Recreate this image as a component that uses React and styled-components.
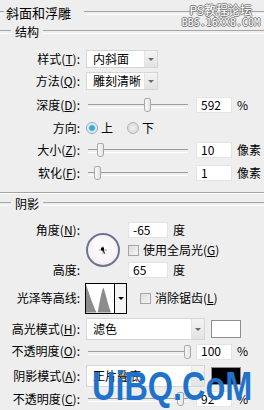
import styled, { createGlobalStyle } from 'styled-components';

const GlobalStyle = createGlobalStyle`
  body {
    margin: 0;
    background: #eeeeee;
  }
  * {
    box-sizing: border-box;
  }
`;

const Panel = styled.div`
  position: relative;
  width: 264px;
  height: 410px;
  overflow: hidden;
  background: #eeeeee;
  font-family: "Noto Sans CJK SC", "Liberation Sans", sans-serif;
  font-size: 12px;
  line-height: 1.2;
  color: #000;
  display: flex;
  flex-direction: column;
`;

const Legend = styled.div`
  display: flex;
  align-items: center;
  height: ${(p) => p.$h}px;
  flex: none;

  &::before,
  &::after {
    content: '';
    height: 2px;
    border-top: 1px solid #a4a4a4;
    border-bottom: 1px solid #ffffff;
  }
  &::before {
    width: ${(p) => p.$lead}px;
  }
  &::after {
    flex: 1;
  }
`;

const LegendText = styled.span`
  padding: 0 ${(p) => p.$padR}px 0 ${(p) => p.$padL}px;
  font-size: ${(p) => p.$size}px;
  white-space: nowrap;
`;

const Separator = styled.div`
  flex: none;
  height: 2px;
  margin-top: ${(p) => p.$mt}px;
  border-top: 1px solid #a4a4a4;
  border-bottom: 1px solid #ffffff;
`;

const Row = styled.div`
  display: flex;
  align-items: center;
  flex: none;
  height: ${(p) => p.$h}px;
  margin-top: ${(p) => p.$mt || 0}px;
`;

const Label = styled.div`
  flex: none;
  width: 80px;
  margin-right: 5px;
  text-align: right;
  white-space: nowrap;
`;

const Select = styled.div`
  display: flex;
  flex: none;
  width: ${(p) => p.$w}px;
  height: ${(p) => p.$h}px;
  margin-left: 1px;
  background: #ffffff;
  border: 1px solid #d6d6d6;
`;

const SelectText = styled.span`
  flex: 1;
  display: flex;
  align-items: center;
  padding-left: 6px;
  white-space: nowrap;
  overflow: hidden;
`;

const SelectArrow = styled.span`
  flex: none;
  width: 13px;
  display: flex;
  align-items: center;
  justify-content: center;
  background: linear-gradient(#f4f4f4, #e2e2e2);
  border-left: 1px solid #e4e4e4;

  &::after {
    content: '';
    border-left: 3px solid transparent;
    border-right: 3px solid transparent;
    border-top: 3px solid #6a6a6a;
  }
`;

const Slider = styled.div`
  position: relative;
  flex: none;
  width: 100px;
  height: 16px;
  margin-left: 3px;

  &::before {
    content: '';
    position: absolute;
    left: 0;
    right: 0;
    top: 7px;
    height: 2px;
    border-top: 1px solid #9c9c9c;
    border-bottom: 1px solid #ffffff;
  }
`;

const Thumb = styled.span`
  position: absolute;
  top: 1px;
  width: 7px;
  height: 14px;
  background: linear-gradient(90deg, #fafafa, #e4e4e4);
  border: 1px solid #a9a9a9;
  border-radius: 2px 2px 3px 3px;
`;

const Field = styled.div`
  flex: none;
  width: ${(p) => p.$w}px;
  height: 16px;
  margin-left: ${(p) => p.$ml}px;
  padding-left: 4px;
  display: flex;
  align-items: center;
  background: #ffffff;
  border: 1px solid #e4e4e4;
`;

const Unit = styled.span`
  margin-left: 5px;
  white-space: nowrap;
`;

const Radio = styled.span`
  flex: none;
  width: 12px;
  height: 12px;
  margin-left: ${(p) => p.$ml}px;
  border-radius: 50%;
  border: 1px solid ${(p) => (p.$on ? '#8fa3b8' : '#b4b4b4')};
  background: ${(p) =>
    p.$on
      ? 'radial-gradient(circle, #3fa9d6 0 2.5px, #bfe3f2 3.2px, #f4f8fa 5px)'
      : 'radial-gradient(circle, #f2f2f2 0, #d6d6d6 6px)'};
`;

const RadioText = styled.span`
  margin-left: 3px;
`;

const AngleBlock = styled.div`
  display: grid;
  flex: none;
  grid-template-columns: 80px 48px 1fr;
  grid-template-rows: repeat(3, 20px);
  margin-top: 6px;
`;

const GridLabel = styled.div`
  grid-column: 1;
  grid-row: ${(p) => p.$row};
  display: flex;
  align-items: center;
  justify-content: flex-end;
  white-space: nowrap;
`;

const Dial = styled.div`
  grid-column: 2;
  grid-row: 1 / 4;
  align-self: center;
  width: 34px;
  height: 34px;
  margin-left: 6px;
  border-radius: 50%;
  border: 2px solid #6b7591;
  background: radial-gradient(circle at 45% 40%, #ffffff 0, #f7f1f4 60%, #ece4ea 100%);
  display: flex;
  align-items: center;
  justify-content: center;
`;

const GridCell = styled.div`
  grid-column: 3;
  grid-row: ${(p) => p.$row};
  display: flex;
  align-items: center;
`;

const Check = styled.span`
  flex: none;
  width: 11px;
  height: 11px;
  margin-left: ${(p) => p.$ml || 0}px;
  border: 1px solid #a6a6a6;
  background: linear-gradient(135deg, #dcdcdc, #f6f6f6);
`;

const CheckText = styled.span`
  margin-left: 4px;
  white-space: nowrap;
`;

const Contour = styled.div`
  display: flex;
  flex: none;
  width: 42px;
  height: 31px;
  background: #ffffff;
  border: 1px solid #000000;
`;

const ContourArrow = styled.span`
  flex: none;
  width: 12px;
  display: flex;
  align-items: center;
  justify-content: center;
  border-left: 1px solid #000000;
  background: #f4f4f4;

  &::after {
    content: '';
    border-left: 3px solid transparent;
    border-right: 3px solid transparent;
    border-top: 3px solid #000000;
  }
`;

const Swatch = styled.div`
  flex: none;
  width: 30px;
  height: 18px;
  margin-left: 6px;
  background: ${(p) => p.$color};
  border: 1px solid #8e8e8e;
`;

const Stamp = styled.div`
  position: absolute;
  top: 4px;
  right: 4px;
  display: flex;
  flex-direction: column;
  align-items: flex-end;
  color: #ffffff;
  text-shadow: 1px 0 0 #7c7c7c, -1px 0 0 #7c7c7c, 0 1px 0 #7c7c7c, 0 -1px 0 #7c7c7c;
  line-height: 1;
`;

const StampTitle = styled.span`
  font-size: 12px;
  margin-right: 8px;
`;

const StampUrl = styled.span`
  margin-top: 2px;
  font-family: "DejaVu Sans Mono", monospace;
  font-size: 10px;
`;

const Watermark = styled.div`
  position: absolute;
  left: 92px;
  top: 366px;
  font-family: "Liberation Sans", Arial, sans-serif;
  font-weight: bold;
  font-size: 40px;
  line-height: 1;
  color: #1f72c9;
  transform: scaleX(0.81);
  transform-origin: left top;
  white-space: nowrap;
  pointer-events: none;
`;

function SliderRow({ label, mnemonic, pos, value, unit, h, mt }) {
  return (
    <Row $h={h} $mt={mt}>
      <Label>
        {label}(<u>{mnemonic}</u>):
      </Label>
      <Slider>
        <Thumb style={{ left: pos - 3 }} />
      </Slider>
      <Field $w={36} $ml={8}>{value}</Field>
      <Unit>{unit}</Unit>
    </Row>
  );
}

export default function App() {
  return (
    <>
      <GlobalStyle />
      <Panel>
        <Legend $h={25} $lead={4}>
          <LegendText $size={13} $padL={2} $padR={13}>
            斜面和浮雕
          </LegendText>
        </Legend>
        <Legend $h={14} $lead={11}>
          <LegendText $size={12} $padL={4} $padR={4}>
            结构
          </LegendText>
        </Legend>

        <Row $h={22} $mt={9}>
          <Label>
            样式(<u>T</u>):
          </Label>
          <Select $w={72} $h={18}>
            <SelectText>内斜面</SelectText>
            <SelectArrow />
          </Select>
        </Row>
        <Row $h={22}>
          <Label>
            方法(<u>Q</u>):
          </Label>
          <Select $w={72} $h={18}>
            <SelectText>雕刻清晰</SelectText>
            <SelectArrow />
          </Select>
        </Row>
        <SliderRow label="深度" mnemonic="D" pos={59} value="592" unit="%" h={24} mt={1} />
        <Row $h={22}>
          <Label>方向:</Label>
          <Radio $on $ml={1} />
          <RadioText>上</RadioText>
          <Radio $ml={14} />
          <RadioText>下</RadioText>
        </Row>
        <SliderRow label="大小" mnemonic="Z" pos={12} value="10" unit="像素" h={22} />
        <SliderRow label="软化" mnemonic="F" pos={9} value="1" unit="像素" h={24} />

        <Separator $mt={7} />
        <Legend $h={20} $lead={11}>
          <LegendText $size={12} $padL={4} $padR={4}>
            阴影
          </LegendText>
        </Legend>

        <AngleBlock>
          <GridLabel $row={1}>
            角度(<u>N</u>):
          </GridLabel>
          <Dial>
            <svg width="12" height="12" viewBox="0 0 12 12">
              <line x1="6" y1="2" x2="6" y2="10" stroke="#9a9aa8" strokeWidth="1" />
              <line x1="2" y1="6" x2="10" y2="6" stroke="#9a9aa8" strokeWidth="1" />
              <line x1="6" y1="6" x2="7.7" y2="9.6" stroke="#000" strokeWidth="1" />
              <rect x="4" y="3.5" width="3" height="3" fill="#000" />
            </svg>
          </Dial>
          <GridCell $row={1}>
            <Field $w={40} $ml={0}>-65</Field>
            <Unit>度</Unit>
          </GridCell>
          <GridCell $row={2}>
            <Check />
            <CheckText>
              使用全局光(<u>G</u>)
            </CheckText>
          </GridCell>
          <GridLabel $row={3}>高度:</GridLabel>
          <GridCell $row={3}>
            <Field $w={40} $ml={0}>65</Field>
            <Unit>度</Unit>
          </GridCell>
        </AngleBlock>

        <Row $h={32} $mt={2}>
          <Label>光泽等高线:</Label>
          <Contour>
            <svg width="29" height="29" viewBox="0 0 29 29">
              <path
                d="M0 0 C3 8 7 22 11 29 L12 29 C14 20 16 6 18 3 C20 8 23 22 26 29 L0 29 Z"
                fill="#8c8c8c"
              />
            </svg>
            <ContourArrow />
          </Contour>
          <Check $ml={13} />
          <CheckText>
            消除锯齿(<u>L</u>)
          </CheckText>
        </Row>

        <Row $h={22} $mt={4}>
          <Label>
            高光模式(<u>H</u>):
          </Label>
          <Select $w={119} $h={22}>
            <SelectText>滤色</SelectText>
            <SelectArrow />
          </Select>
          <Swatch $color="#ffffff" />
        </Row>
        <SliderRow label="不透明度" mnemonic="O" pos={99} value="100" unit="%" h={23} />
        <Row $h={26}>
          <Label>
            阴影模式(<u>A</u>):
          </Label>
          <Select $w={119} $h={22}>
            <SelectText>正片叠底</SelectText>
            <SelectArrow />
          </Select>
          <Swatch $color="#000000" />
        </Row>
        <SliderRow label="不透明度" mnemonic="C" pos={92} value="92" unit="%" h={20} />

        <Stamp>
          <StampTitle>PS教程论坛</StampTitle>
          <StampUrl>BBS.16XX8.COM</StampUrl>
        </Stamp>
        <Watermark>UiBQ.CoM</Watermark>
      </Panel>
    </>
  );
}
